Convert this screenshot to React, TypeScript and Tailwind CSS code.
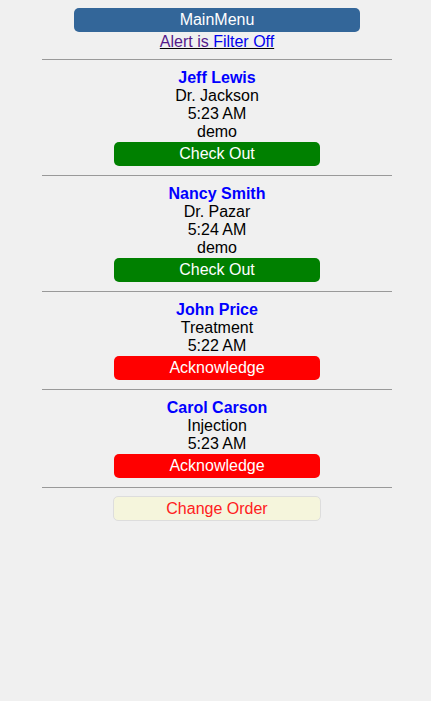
import React from "react";

type Item = { name: string; lines: string[]; action: "check" | "ack" };

const items: Item[] = [
  { name: "Jeff Lewis", lines: ["Dr. Jackson", "5:23 AM", "demo"], action: "check" },
  { name: "Nancy Smith", lines: ["Dr. Pazar", "5:24 AM", "demo"], action: "check" },
  { name: "John Price", lines: ["Treatment", "5:22 AM"], action: "ack" },
  { name: "Carol Carson", lines: ["Injection", "5:23 AM"], action: "ack" },
];

export default function App() {
  return (
    <div
      className="min-h-[701px] w-full bg-[#f0f0f0] text-[16px] leading-[18px] text-black"
      style={{ fontFamily: '"Liberation Sans", Arial, sans-serif' }}
    >
      <div className="ml-[42px] w-[350px] pt-2 text-center">
        <div className="mx-auto flex h-6 w-[286px] items-center justify-center rounded-[5px] bg-[#336699] text-white">
          MainMenu
        </div>
        <div className="pt-px">
          <span className="underline">
            <span className="text-[#551a8b]">Alert is </span>
            <span className="text-[#0000ee]">Filter Off</span>
          </span>
        </div>
        <div className="mt-2 mb-2 h-px bg-[#999999]" />
        {items.map((it) => (
          <div key={it.name} className="pt-px">
            <div className="font-bold text-[#0000ff]">{it.name}</div>
            {it.lines.map((l, i) => (
              <div key={i}>{l}</div>
            ))}
            <div
              className={
                it.action === "check"
                  ? "mx-auto mt-px flex h-6 w-[206px] items-center justify-center rounded-[5px] bg-[#008000] text-white"
                  : "mx-auto mt-px flex h-6 w-[206px] items-center justify-center rounded-[5px] bg-[#ff0000] text-white"
              }
            >
              {it.action === "check" ? "Check Out" : "Acknowledge"}
            </div>
            <div className="mt-[9px] mb-2 h-px bg-[#999999]" />
          </div>
        ))}
        <div className="mx-auto mt-px flex h-[25px] w-[208px] items-center justify-center rounded-[5px] border border-[#dddddd] bg-[#f5f5dc] text-[#ff2020]">
          Change Order
        </div>
      </div>
    </div>
  );
}
